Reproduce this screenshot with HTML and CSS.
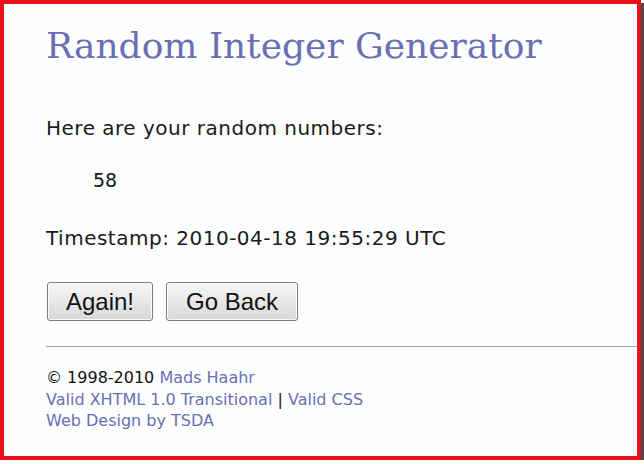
FILE: index.html
```html
<!DOCTYPE html>
<html>
<head>
<meta charset="utf-8">
<title>Random Integer Generator</title>
<link rel="stylesheet" href="styles.css">
</head>
<body>
<div class="frame">
  <div class="content">
    <h1 class="title">Random Integer Generator</h1>
    <p class="lead">Here are your random numbers:</p>
    <pre class="numbers">58</pre>
    <p class="stamp">Timestamp: 2010-04-18 19:55:29 UTC</p>
    <div class="buttons">
      <button class="btn btn-again">Again!</button>
      <button class="btn btn-back">Go Back</button>
    </div>
  </div>
  <hr class="rule">
  <div class="footer">
    <div>© 1998-2010 <a href="#">Mads Haahr</a></div>
    <div><a href="#">Valid XHTML 1.0 Transitional</a> | <a href="#">Valid CSS</a></div>
    <div><a href="#">Web Design by TSDA</a></div>
  </div>
</div>
</body>
</html>
```
FILE: styles.css
```css
html, body {
  margin: 0;
  padding: 0;
  background: #ffffff;
}
.frame {
  box-sizing: border-box;
  width: 641px;
  height: 460px;
  border: 4px solid #e8101a;
  box-shadow: 3px 3px 0 #4a4a4a;
  background: #fdfefe;
  overflow: hidden;
}
.content {
  padding-left: 42px;
  font-family: "DejaVu Sans", Verdana, sans-serif;
  color: #1a1a1a;
}
.title {
  margin: 0;
  padding-top: 20px;
  font-family: "DejaVu Serif", Georgia, serif;
  font-weight: normal;
  font-size: 36px;
  line-height: 44px;
  color: #6a6fb4;
}
.lead {
  margin: 48px 0 0;
  font-size: 20px;
  letter-spacing: 0.5px;
  line-height: 24px;
}
.numbers {
  margin: 28px 0 0 47px;
  font-family: "DejaVu Sans Mono", monospace;
  font-size: 20px;
  line-height: 24px;
}
.stamp {
  margin: 34px 0 0;
  font-size: 20px;
  letter-spacing: 0.5px;
  line-height: 24px;
}
.buttons {
  display: flex;
  gap: 13px;
  margin-top: 32px;
  padding-left: 1px;
}
.btn {
  box-sizing: border-box;
  height: 39px;
  font-family: "Liberation Sans", Arial, sans-serif;
  font-size: 24px;
  color: #111;
  border: 1px solid #7c7c7c;
  border-radius: 3px;
  background: linear-gradient(#f6f6f6, #e8e8e8 50%, #d6d6d6);
  box-shadow: inset 0 0 0 1px #fbfbfb;
  padding: 0;
}
.btn-again { width: 106px; }
.btn-back { width: 132px; }
.rule {
  margin: 25px 0 0 42px;
  border: 0;
  border-top: 1px solid #9a9cd0;
  height: 0;
}
.footer {
  padding: 20px 0 0 42px;
  font-family: "DejaVu Sans", Tahoma, sans-serif;
  font-size: 16px;
  line-height: 21.5px;
  color: #111;
}
.footer a {
  color: #6a6fb4;
  text-decoration: none;
}
```
